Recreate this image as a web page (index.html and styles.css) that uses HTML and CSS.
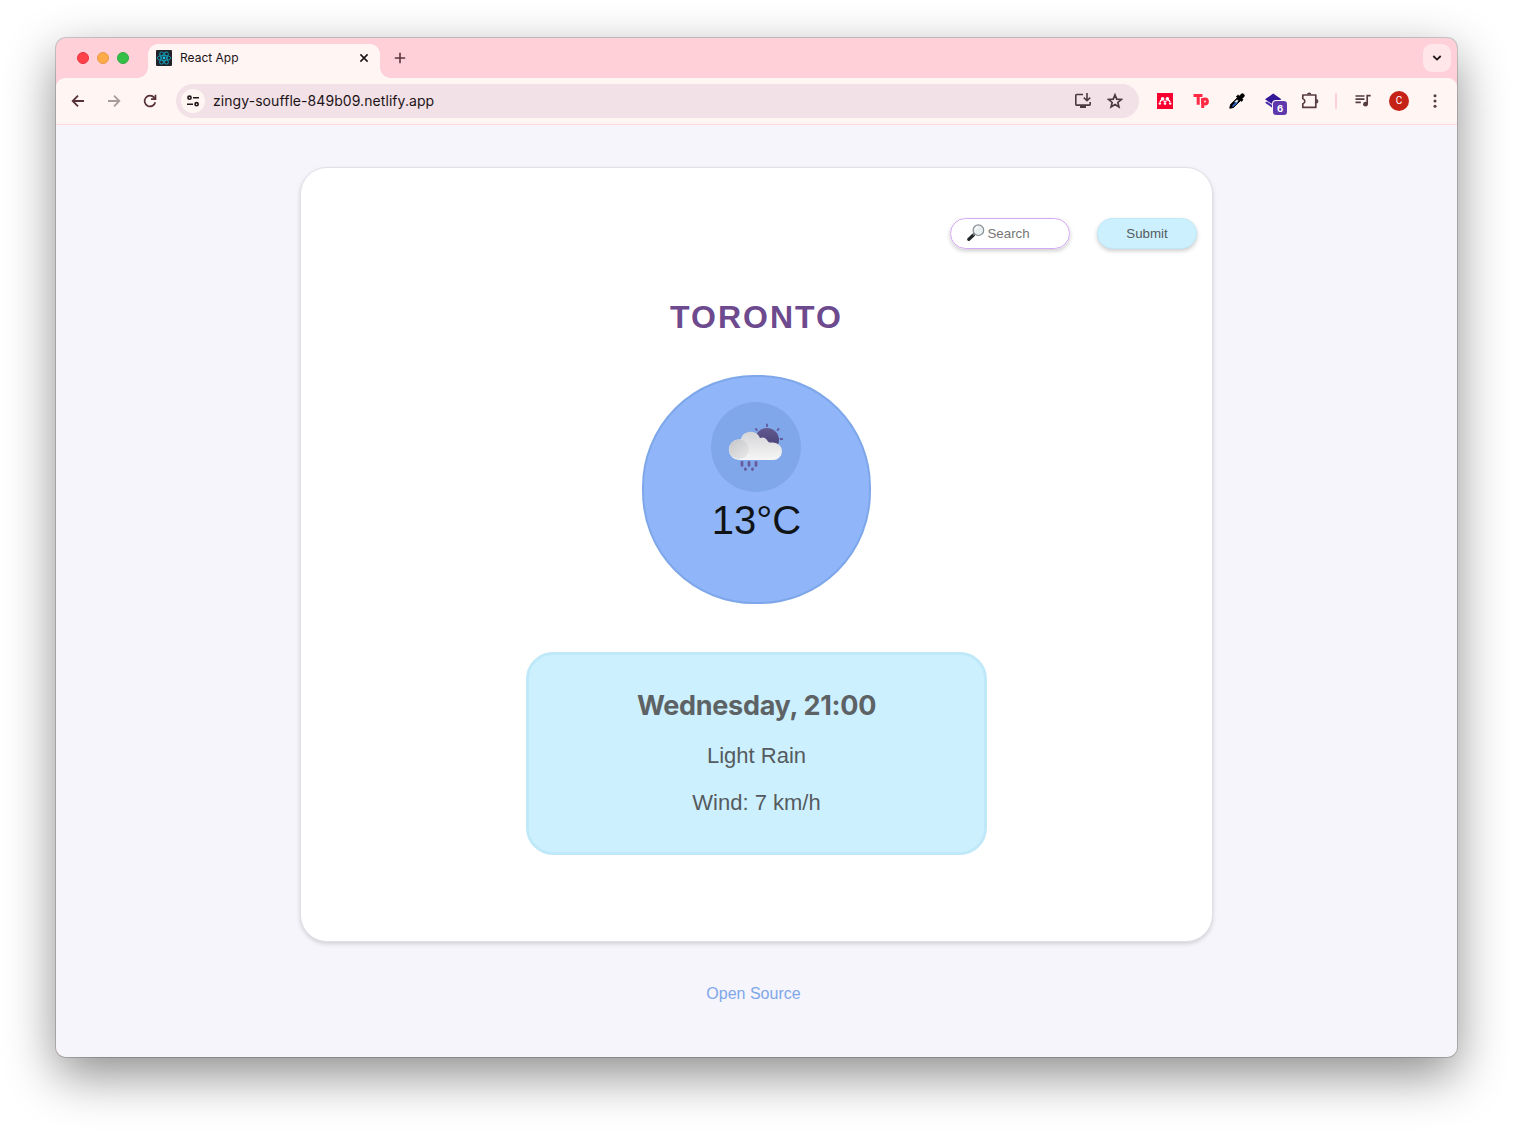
FILE: index.html
```html
<!DOCTYPE html>
<html lang="en">
<head>
<meta charset="utf-8">
<title>React App</title>
<link rel="stylesheet" href="styles.css">
</head>
<body>
<div class="window">
  <header class="tabstrip">
    <div class="lights"><span class="light red"></span><span class="light amber"></span><span class="light green"></span></div>
    <div class="tab">
      <svg class="favicon" width="16" height="16" viewBox="0 0 16 16"><rect width="16" height="16" rx="1" fill="#20232a"/><g fill="none" stroke="#149eb8" stroke-width=".9"><ellipse cx="8" cy="8" rx="6.8" ry="2.6"/><ellipse cx="8" cy="8" rx="6.8" ry="2.6" transform="rotate(60 8 8)"/><ellipse cx="8" cy="8" rx="6.8" ry="2.6" transform="rotate(120 8 8)"/></g><circle cx="8" cy="8" r="1.4" fill="#20c5dc"/></svg>
      <span class="tab-title">React App</span>
      <svg width="10" height="10" viewBox="0 0 10 10"><path d="M1.4 1.4l7.2 7.2M8.6 1.4L1.4 8.6" stroke="#201619" stroke-width="1.6"/></svg>
    </div>
    <svg class="plus" width="12" height="12" viewBox="0 0 12 12"><path d="M6 .8v10.4M.8 6h10.4" stroke="#5a363d" stroke-width="1.6"/></svg>
    <div class="tabsearch"><svg width="10" height="8" viewBox="0 0 10 8"><path d="M1.3 2L5 5.6 8.7 2" fill="none" stroke="#201619" stroke-width="1.8"/></svg></div>
  </header>
  <div class="toolbar">
    <div class="nav">
      <svg width="16" height="16" viewBox="0 0 16 16" fill="none" stroke="#573239" stroke-width="1.8"><path d="M14 8H3M8 2.7L2.7 8 8 13.3"/></svg>
      <svg width="16" height="16" viewBox="0 0 16 16" fill="none" stroke="#a99a9c" stroke-width="1.8"><path d="M2 8h11M8 2.7L13.3 8 8 13.3"/></svg>
      <svg width="16" height="16" viewBox="0 0 16 16" fill="none" stroke="#573239" stroke-width="1.7"><path d="M13.3 9.2A5.4 5.4 0 1 1 12.2 4.6L13.5 6M13.5 1.8v4.4H9"/></svg>
    </div>
    <div class="omnibox">
      <span class="site"><svg width="14" height="14" viewBox="0 0 14 14" fill="none" stroke="#201619" stroke-width="1.6"><circle cx="3.5" cy="3.7" r="1.6"/><path d="M7 3.7h6M1 10.2h6"/><circle cx="10.6" cy="10.2" r="1.6"/></svg></span>
      <span class="url">zingy-souffle-849b09.netlify.app</span>
      <svg class="install" width="18" height="16" viewBox="0 0 18 16" fill="none" stroke="#4d3b42" stroke-width="1.6"><path d="M9 1.5H2.6Q1.8 1.5 1.8 2.3v9q0 .8.8.8h12.8q.8 0 .8-.8V9M13 0v7.2M9.8 4.6L13 7.7l3.2-3.1"/><path d="M6 12h6v3H6z" fill="#4d3b42" stroke="none"/></svg>
      <svg width="16" height="16" viewBox="0 0 16 16"><path d="M8 1.8l1.75 4.3 4.65.35-3.55 3 1.1 4.55L8 11.55 4.05 14l1.1-4.55-3.55-3 4.65-.35z" fill="none" stroke="#4d3b42" stroke-width="1.7"/></svg>
    </div>
    <div class="extensions">
      <svg width="16" height="16" viewBox="0 0 16 16"><path fill="#f7002f" d="M0 0h16v16H0z"/><g fill="#fff"><circle cx="5.6" cy="5.9" r="1.8"/><circle cx="10.4" cy="5.9" r="1.8"/><circle cx="2.8" cy="10.6" r="1.2"/><circle cx="8" cy="10.6" r="1.3"/><circle cx="13.2" cy="10.6" r="1.2"/></g><path d="M2.9 9.4q.5-2 1.9-2.4M13.1 9.4q-.5-2-1.9-2.4M6.6 8q1.4 1.2 2.8 0" fill="none" stroke="#fff" stroke-width="1.4"/></svg>
      <svg width="16" height="16" viewBox="0 0 16 16" fill="none" stroke="#ff2a43" stroke-width="3"><path d="M.5 2.6h9M5.2 2.5v9.2"/><path d="M9.7 5v10"/><circle cx="11.9" cy="8.4" r="2.5"/></svg>
      <svg width="16" height="16" viewBox="0 0 16 16"><path d="M.8 15.2l.8-3.6 7-7 2.9 2.9-7 7z" fill="#000" stroke="#000"/><path d="M2.6 13.2l4.8-4.8 1.6 1-4.6 4.4z" fill="#2c68c9"/><path d="M5 9.3l3-2.9 1.5 1.4-1.7 1.5z" fill="#e9f0fb"/><path d="M7.2 3.6L9 1.9l1.5 1L12.3 1q1.2-1 2.5.3t.2 2.5l-1.9 1.8 1 1.4-1.7 1.6z" fill="#000" stroke="#000" stroke-width=".6"/></svg>
      <svg class="stack" width="22" height="22" viewBox="0 0 22 22"><path d="M8.2 .6l8.2 5.6-8.2 5.6L0 6.2z" fill="#321798"/><path d="M0 9.8l2-1.3 6.2 4.2 6.2-4.2 2 1.3-8.2 5.6z" fill="#4930a8"/><rect x="7" y="7" width="15.5" height="15.5" rx="3.8" fill="#fff6f4"/><rect x="8" y="8" width="14" height="14" rx="3.2" fill="#6038ae"/><text x="15" y="18.5" text-anchor="middle" class="badge-num">6</text></svg>
      <svg class="puzzle" width="18" height="18" viewBox="0 0 18 18"><path d="M1.8 3h13v12.4h-13v-3.5q2-.5 2-2.6t-2-2.6z" fill="none" stroke="#573b43" stroke-width="1.7" stroke-linejoin="round"/><path d="M6 2.6a2.2 2.2 0 0 1 4.4 0zM15.2 7a2.2 2.2 0 0 1 0 4.4z" fill="#573b43"/></svg>
    </div>
    <span class="divider"></span>
    <svg class="media" width="16" height="14" viewBox="0 0 16 14"><path d="M.5 2h9M.5 5.2h9M.5 8.4h5.3M12.2 10V1.6h3.5" fill="none" stroke="#573b43" stroke-width="1.7"/><circle cx="10.5" cy="10.2" r="2.4" fill="#573b43"/></svg>
    <span class="avatar">C</span>
    <svg class="more" width="4" height="16" viewBox="0 0 4 16" fill="#573b43"><circle cx="2" cy="2.7" r="1.5"/><circle cx="2" cy="8" r="1.5"/><circle cx="2" cy="13.3" r="1.5"/></svg>
  </div>
  <main class="page">
    <section class="card">
      <form class="search-form">
        <div class="search"><svg width="18" height="18" viewBox="0 0 18 18"><path d="M1.8 15.4l4.6-4.4" stroke="#222628" stroke-width="3.2" stroke-linecap="round"/><path d="M6 11.2l2-2" stroke="#777c80" stroke-width="1.6"/><circle cx="11.4" cy="6.2" r="5.3" fill="#e9eef0" stroke="#879096" stroke-width="1.2"/><path d="M8.2 5.6q.5-2.5 3-2.8" stroke="#fff" stroke-width="1.2" fill="none"/></svg><span>Search</span></div>
        <button type="button" class="submit">Submit</button>
      </form>
      <h1 class="city">TORONTO</h1>
      <div class="dial">
        <div class="weather-icon">
          <svg width="90" height="90" viewBox="0 0 90 90">
            <defs>
              <linearGradient id="sun" x1="0" y1="0" x2="0" y2="1"><stop offset="0" stop-color="#62598f"/><stop offset="1" stop-color="#3f3b70"/></linearGradient>
              <linearGradient id="cloud" x1="0" y1="0" x2="0" y2="1"><stop offset="0" stop-color="#d5d5d8"/><stop offset="1" stop-color="#f6f6f6"/></linearGradient>
              <linearGradient id="puff" x1="0" y1="0" x2="1" y2="1"><stop offset="0" stop-color="#bcbdc0"/><stop offset="1" stop-color="#e6e6e7"/></linearGradient>
            </defs>
            <circle cx="56" cy="38" r="12" fill="url(#sun)"/>
            <g stroke="#645b9f" stroke-width="1.8"><path d="M56 21.8v3.2M44.3 26.4l2.1 2.3M68.2 26.4l-2.1 2.3M68.8 37h3.2"/></g>
            <path d="M28.5 58a10.3 10.3 0 0 1-.5-20.8h1.8a10.2 10.2 0 0 1 19.2-1.2q5-2 8 3.5l1.2 1h4a8.7 8.7 0 0 1 0 17.5z" fill="url(#cloud)"/>
            <circle cx="28" cy="47.3" r="9.8" fill="url(#puff)" opacity=".75"/>
            <g stroke="#675c9c" stroke-width="2.8" stroke-linecap="round"><path d="M31 60.4v3M38 60.4v3M45 60.4v3M34.4 66.8v.8M41.5 66.8v.8"/></g>
          </svg>
        </div>
        <div class="temperature">13°C</div>
      </div>
      <div class="details">
        <h2 class="day">Wednesday, 21:00</h2>
        <p>Light Rain</p>
        <p>Wind: 7 km/h</p>
      </div>
    </section>
    <a class="source">Open Source</a>
  </main>
</div>
</body>
</html>
```
FILE: styles.css
```css
* { box-sizing: border-box; }
body { margin: 0; width: 1513px; height: 1131px; padding: 38px 56px; background: #fff; overflow: hidden; font-family: "Liberation Sans", Arial, sans-serif; }
svg { display: block; flex: none; }
.window { width: 1401px; height: 1019px; border-radius: 10px; overflow: hidden; background: #ffd0d8; box-shadow: 0 0 0 1px rgba(0,0,0,.18), 0 18px 50px rgba(0,0,0,.45); display: flex; flex-direction: column; }
.tabstrip { height: 40px; flex: none; display: flex; align-items: center; padding: 0 6px 0 21px; }
.lights { display: flex; gap: 8px; width: 71px; }
.light { width: 12px; height: 12px; border-radius: 50%; }
.red { background: #ff4249; border: 1px solid #eb3140; }
.amber { background: #ffac48; border: 1px solid #e89a48; }
.green { background: #34c047; border: 1px solid #2faa43; }
.tab { position: relative; width: 232px; height: 34px; align-self: flex-end; border-radius: 10px 10px 0 0; background: #fff6f4; display: flex; align-items: center; padding: 0 11px 6px 8px; }
.tab::before, .tab::after { content: ""; position: absolute; bottom: 0; width: 10px; height: 10px; }
.tab::before { left: -10px; background: radial-gradient(circle at 0 0, transparent 9.5px, #fff6f4 10px); }
.tab::after { right: -10px; background: radial-gradient(circle at 100% 0, transparent 9.5px, #fff6f4 10px); }
.tab-title { flex: 1; margin-left: 8px; font: 400 12px/16px Inter, sans-serif; color: #1d1417; }
.plus { margin-left: 14px; }
.tabsearch { width: 28px; height: 28px; margin-left: auto; border-radius: 9px; background: #ffe6e9; display: grid; place-items: center; }
.toolbar { height: 47px; flex: none; display: flex; align-items: center; background: #fff6f4; border-bottom: 1px solid #ffd6de; border-radius: 9px 9px 0 0; padding-left: 14px; }
.nav { display: flex; gap: 20px; width: 106px; }
.omnibox { width: 963px; height: 34px; border-radius: 17px; background: #f2e1e7; display: flex; align-items: center; padding: 0 16px 0 5px; }
.site { width: 24px; height: 24px; border-radius: 50%; background: #fff6f4; display: grid; place-items: center; }
.url { flex: 1; margin-left: 8px; font: 14px/20px Inter, sans-serif; letter-spacing: .07px; color: #1d1417; }
.install { margin-right: 15px; }
.extensions { display: flex; align-items: center; gap: 20px; margin-left: 18px; }
.stack { margin: 6px -6px 0 0; }
.puzzle { margin-top: -1px; }
.badge-num { font: 700 9.5px Inter, sans-serif; fill: #fff; }
.divider { width: 2px; height: 16px; margin-left: 16px; background: #ffd0d8; }
.media { margin-left: 18px; }
.avatar { width: 20px; height: 20px; margin-left: 18px; border-radius: 50%; background: #c62117; color: #fff; font: 10px/20px Roboto, sans-serif; text-align: center; }
.more { margin-left: 24px; }
.page { flex: 1; background: #f6f5fc; display: flex; flex-direction: column; align-items: center; padding-top: 42px; }
.card { width: 913px; height: 775px; border: 1px solid #e1e0e6; border-radius: 27px; background: #fff; box-shadow: 0 2px 4px rgba(0,0,0,.15); display: flex; flex-direction: column; align-items: center; padding-top: 50px; }
.search-form { align-self: stretch; display: flex; justify-content: flex-end; gap: 27px; padding-right: 15px; }
.search { width: 120px; height: 31px; border: 1px solid #d4a9f5; border-radius: 16px; display: flex; align-items: center; gap: 2.5px; padding: 0 0 1px 16px; font-size: 13.3px; color: #757575; box-shadow: 0 2px 4px rgba(0,0,0,.2); }
.submit { width: 100px; height: 31px; border: 1px solid #bfe9f8; border-radius: 16px; background: #cdf0ff; color: #555b5e; font: 13.3px "Liberation Sans", Arial, sans-serif; box-shadow: 0 2px 4px rgba(0,0,0,.2); }
.city { margin: 50px 0 0; font-size: 32px; line-height: 36px; letter-spacing: 2px; color: #6d4a8e; }
.dial { width: 229px; height: 229px; margin-top: 40px; border: 2px solid #7ea7ea; border-radius: 112px; background: #90b6f9; display: flex; flex-direction: column; align-items: center; padding: 25px 1px 0 0; }
.weather-icon { width: 90px; height: 90px; border-radius: 50%; background: #7fa7e9; }
.temperature { margin: 4px 0 0 1px; font-size: 40px; line-height: 48px; color: #111417; }
.details { width: 461px; height: 203px; margin-top: 48px; border: 3px solid #bfe9f8; border-radius: 27px; background: #cdf0ff; color: #555b5e; text-align: center; padding-top: 34px; }
.day { margin: 0 0 20px; font: 700 27px/34px Inter, sans-serif; letter-spacing: -.3px; color: #5d6265; }
.details p { margin: 0 0 21px; font-size: 22px; line-height: 26px; }
.source { margin: 43px 6px 0 0; font-size: 16px; line-height: 18px; color: #7ea7ea; }
```
